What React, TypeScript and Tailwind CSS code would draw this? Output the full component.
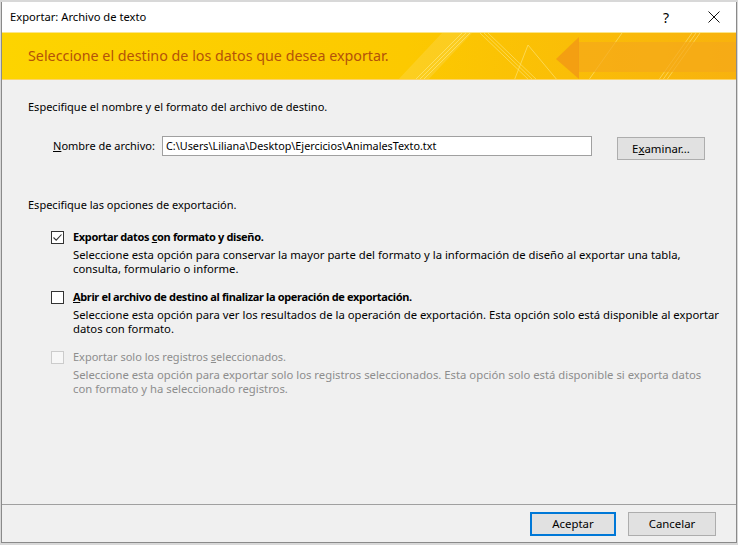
import React from 'react';

const font = { fontFamily: '"Noto Sans", "Liberation Sans", sans-serif' };

const Check: React.FC<{ checked?: boolean; disabled?: boolean }> = ({ checked, disabled }) => (
  <div
    className={
      'w-[13px] h-[13px] shrink-0 border flex items-center justify-center ' +
      (disabled ? 'border-[#cccccc] bg-[#f7f7f7]' : 'border-[#333333] bg-white')
    }
  >
    {checked && (
      <svg width="11" height="11" viewBox="0 0 11 11">
        <path d="M1.5 5.5 L4.2 8.2 L9.5 2.5" fill="none" stroke="#333" strokeWidth="1.1" />
      </svg>
    )}
  </div>
);

const Option: React.FC<{
  checked?: boolean;
  disabled?: boolean;
  label: React.ReactNode;
  lines: string[];
}> = ({ checked, disabled, label, lines }) => (
  <div className={'flex flex-col ' + (disabled ? 'text-[#8d8d8d]' : 'text-black')}>
    <div className="flex items-center h-[16px]">
      <div className="w-[22px] flex">
        <Check checked={checked} disabled={disabled} />
      </div>
      <span
        className={
          'whitespace-nowrap ' +
          (disabled ? 'text-[11px]' : 'text-[11px] font-bold tracking-[-0.35px]')
        }
      >
        {label}
      </span>
    </div>
    <div className="pl-[22px] mt-[3px] leading-[13.5px] text-[11.3px] whitespace-nowrap">
      {lines.map((l) => (
        <div key={l}>{l}</div>
      ))}
    </div>
  </div>
);

const Banner = () => (
  <div className="relative h-[48px] border-t border-[#fbe68c] border-b border-b-[#fbd36a] overflow-hidden">
    <svg className="absolute inset-0" width="735" height="48" viewBox="0 0 735 48">
      <defs>
        <linearGradient id="bg" x1="0" x2="1" y1="0" y2="0">
          <stop offset="0" stopColor="#fdd400" />
          <stop offset="0.55" stopColor="#fcc900" />
          <stop offset="1" stopColor="#f8b20e" />
        </linearGradient>
      </defs>
      <rect width="735" height="48" fill="url(#bg)" />
      <polygon points="395,48 440,0 470,0 425,48" fill="#ffffff" opacity="0.12" />
      <g stroke="#fff6b0" strokeWidth="0.8" opacity="0.55">
        <line x1="412" y1="48" x2="460" y2="0" />
        <line x1="416" y1="48" x2="464" y2="0" />
        <line x1="420" y1="48" x2="468" y2="0" />
        <line x1="478" y1="0" x2="528" y2="48" />
        <line x1="482" y1="0" x2="532" y2="48" />
        <line x1="486" y1="0" x2="536" y2="48" />
        <line x1="512" y1="48" x2="526" y2="12" />
        <line x1="526" y1="12" x2="556" y2="48" />
        <line x1="586" y1="48" x2="620" y2="0" />
        <line x1="656" y1="48" x2="690" y2="0" />
        <line x1="660" y1="48" x2="694" y2="0" />
        <line x1="664" y1="48" x2="698" y2="0" />
      </g>
      <rect x="576" y="9" width="160" height="30" fill="#f5a81a" opacity="0.7" />
      <polygon points="554,26 577,4 577,46" fill="#f29a14" opacity="0.85" />
    </svg>
    <div className="relative h-full flex items-center pl-[26px] text-[14.3px] text-[#b45309]">
      Seleccione el destino de los datos que desea exportar.
    </div>
  </div>
);

export default function App() {
  return (
    <div className="w-[738px] h-[545px] bg-[#d8d8d8] pt-[2px] pl-[1px]" style={font}>
      <div className="w-[736px] h-[541px] flex flex-col border-l border-r border-b border-[#8a8a8a] bg-[#f0f0f0] text-[11px]">
        <div className="h-[30px] bg-white flex items-center pl-[8px] text-black">
          <span className="flex-1 text-[11.2px]">Exportar: Archivo de texto</span>
          <span className="text-[14px] w-[20px] mr-[32px] text-center">?</span>
          <svg className="mr-[16px]" width="12" height="12" viewBox="0 0 12 12">
            <path d="M0.5 0.5 L11.5 11.5 M11.5 0.5 L0.5 11.5" stroke="#111" strokeWidth="1" />
          </svg>
        </div>
        <Banner />
        <div className="flex-1 flex flex-col pl-[26px] pt-[19px]">
          <div className="h-[16px] leading-[16px]">Especifique el nombre y el formato del archivo de destino.</div>
          <div className="flex items-start mt-[21px] pl-[25px]">
            <span className="w-[109px] pt-[2px] whitespace-nowrap">
              <u>N</u>ombre de archivo:
            </span>
            <div className="w-[430px] h-[20px] bg-white border border-[#a0a0a0] flex items-center px-[3px] text-[10.8px] whitespace-nowrap">
              C:\Users\Liliana\Desktop\Ejercicios\AnimalesTexto.txt
            </div>
            <div className="ml-[25px] mt-[1px] w-[88px] h-[23px] bg-[#e1e1e1] border border-[#adadad] flex items-center justify-center text-[11.4px]">
              E<u>x</u>aminar...
            </div>
          </div>
          <div className="h-[16px] leading-[16px] mt-[37px]">Especifique las opciones de exportación.</div>
          <div className="flex flex-col pl-[23px] mt-[16px] gap-[14px]">
            <Option
              checked
              label={
                <>
                  Exportar datos <u>c</u>on formato y diseño.
                </>
              }
              lines={[
                'Seleccione esta opción para conservar la mayor parte del formato y la información de diseño al exportar una tabla,',
                'consulta, formulario o informe.',
              ]}
            />
            <Option
              label={
                <>
                  <u>A</u>brir el archivo de destino al finalizar la operación de exportación.
                </>
              }
              lines={[
                'Seleccione esta opción para ver los resultados de la operación de exportación. Esta opción solo está disponible al exportar',
                'datos con formato.',
              ]}
            />
            <Option
              disabled
              label={
                <>
                  Exportar solo los registros <u>s</u>eleccionados.
                </>
              }
              lines={[
                'Seleccione esta opción para exportar solo los registros seleccionados. Esta opción solo está disponible si exporta datos',
                'con formato y ha seleccionado registros.',
              ]}
            />
          </div>
        </div>
        <div className="h-[38px] border-t border-[#a0a0a0] flex items-center justify-end pr-[20px] gap-[12px] text-[11.4px]">
          <div className="w-[86px] h-[24px] bg-[#e1e1e1] border-2 border-[#0078d7] flex items-center justify-center">
            Aceptar
          </div>
          <div className="w-[88px] h-[24px] bg-[#e1e1e1] border border-[#adadad] flex items-center justify-center">
            Cancelar
          </div>
        </div>
      </div>
    </div>
  );
}
